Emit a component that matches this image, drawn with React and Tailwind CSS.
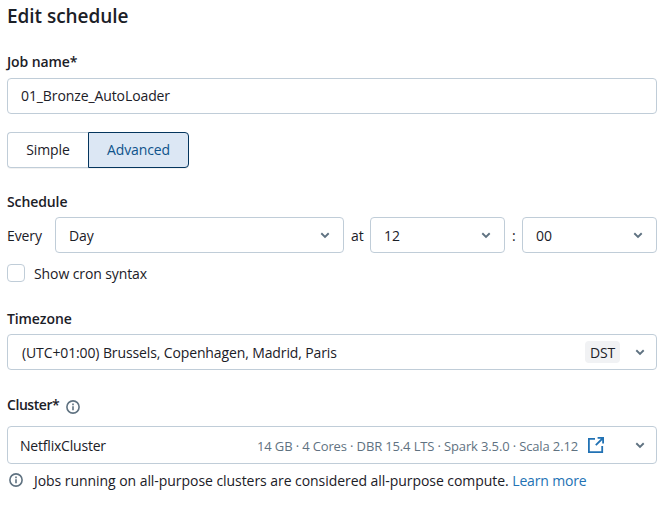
const Chevron = () => (
  <svg className="h-[7px] w-[10px] shrink-0" viewBox="0 0 10 7" fill="none" stroke="#5f7281" strokeWidth="1.9">
    <path d="M1.3 1.3 5 4.9 8.7 1.3" />
  </svg>
);

const Info = () => (
  <svg className="size-[14px] shrink-0" viewBox="0 0 14 14" fill="none" stroke="#5f7281" strokeWidth="1.6">
    <circle cx="7" cy="7" r="6.1" />
    <path d="M7 6.2v4.1M7 3.6v1.6" />
  </svg>
);

const External = () => (
  <svg className="size-4 shrink-0" viewBox="0 0 16 16" fill="none" stroke="#2272b4" strokeWidth="1.8">
    <path d="M7 1.9H.9v13.2h13.3V9M9.6 .9h5.5v5.5M15 1 7.8 8.2" />
  </svg>
);

const box = "flex items-center rounded-[4px] border border-[#c0cdd8] bg-white";
const label = "font-semibold leading-5";

const Select = ({ value, className }) => (
  <div className={`${box} h-9 justify-between pl-[13px] pr-[13px] ${className}`}>
    <span className="pt-px">{value}</span>
    <span className="flex pt-px"><Chevron /></span>
  </div>
);

export default function App() {
  return (
    <main className="h-[520px] w-[661px] overflow-hidden whitespace-nowrap bg-white pl-[7px] pr-1 font-['Open_Sans','Noto_Sans',sans-serif] text-[14px] leading-5 tracking-[-0.1px] text-[#1b2027]">
      <h1 className="pt-1 text-[19px] font-semibold leading-6 tracking-[-0.04px]">Edit schedule</h1>

      <div className={`mt-6 ${label} tracking-[-0.1px]`}>Job name*</div>
      <div className={`mt-[6px] h-9 px-[13px] ${box}`}>01_Bronze_AutoLoader</div>

      <div className="mt-[18px] flex h-9">
        <button className="w-[81px] rounded-l-[4px] border border-r-0 border-[#c0cdd8] shadow-[0_1px_0_#0000000d]">Simple</button>
        <button className="w-[101px] rounded-r-[4px] border border-[#04355d] bg-[#dce7f4] text-[#0e538b] shadow-[0_1px_0_#0000000d]">Advanced</button>
      </div>

      <div className={`mt-6 ${label} tracking-[-0.1px]`}>Schedule</div>
      <div className="mt-[5px] flex items-center">
        <span className="w-12 pt-px">Every</span>
        <Select value="Day" className="w-[289px]" />
        <span className="w-[26px] pl-[7px] pt-px">at</span>
        <Select value="12" className="w-[135px]" />
        <span className="w-[17px] pl-[7px] pt-px">:</span>
        <Select value="00" className="w-[135px]" />
      </div>
      <div className="mt-[10px] flex items-start">
        <span className="mr-[9px] mt-px size-[18px] rounded-[4px] border border-[#c0cdd8]" />
        <span className="pt-px">Show cron syntax</span>
      </div>

      <div className={`mt-[25px] ${label} tracking-[-0.1px]`}>Timezone</div>
      <div className={`mt-[5px] h-9 pl-[14px] pr-[11px] ${box}`}>
        <span className="pt-px tracking-[-0.12px]">(UTC+01:00) Brussels, Copenhagen, Madrid, Paris</span>
        <span className="ml-auto mr-[15px] flex h-[22px] w-[35px] items-center justify-center rounded-[4px] bg-[#f1f2f4] pt-px">DST</span>
        <span className="flex pt-px"><Chevron /></span>
      </div>

      <div className={`mt-[25px] flex items-center ${label}`}>
        <span className="tracking-[-0.45px]">Cluster*</span>
        <span className="ml-[7px] mt-1"><Info /></span>
      </div>
      <div className={`mt-[11px] h-[38px] pl-3 pr-[11px] ${box}`}>
        <span className="pt-px tracking-[-0.2px]">NetflixCluster</span>
        <span className="ml-auto mr-[10px] pt-px text-[13px] tracking-[-0.14px] text-[#5f7281]">14 GB · 4 Cores · DBR 15.4 LTS · Spark 3.5.0 · Scala 2.12</span>
        <External />
        <span className="ml-[31px] flex pt-px"><Chevron /></span>
      </div>
      <div className="mt-[6px] flex items-start pl-[2px]">
        <span className="flex pt-[3px]"><Info /></span>
        <span className="ml-[11px] pt-px tracking-[-0.055px]">
          Jobs running on all-purpose clusters are considered all-purpose compute. <a className="tracking-[-0.15px] text-[#2272b4]">Learn more</a>
        </span>
      </div>
    </main>
  );
}
